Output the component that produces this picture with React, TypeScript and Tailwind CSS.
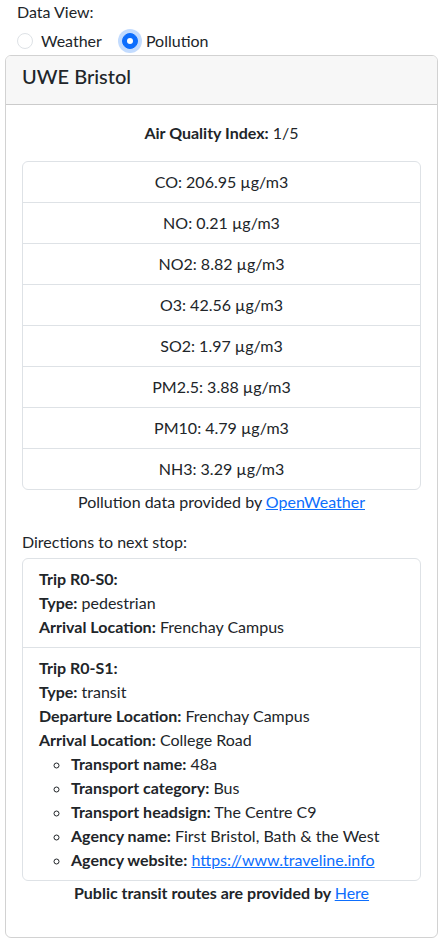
const pollutants = [
  'CO: 206.95 µg/m3',
  'NO: 0.21 µg/m3',
  'NO2: 8.82 µg/m3',
  'O3: 42.56 µg/m3',
  'SO2: 1.97 µg/m3',
  'PM2.5: 3.88 µg/m3',
  'PM10: 4.79 µg/m3',
  'NH3: 3.29 µg/m3',
];

const transitDetails: { label: string; value: string; href?: string }[] = [
  { label: 'Transport name:', value: '48a' },
  { label: 'Transport category:', value: 'Bus' },
  { label: 'Transport headsign:', value: 'The Centre C9' },
  { label: 'Agency name:', value: 'First Bristol, Bath & the West' },
  { label: 'Agency website:', value: 'https://www.traveline.info', href: 'https://www.traveline.info' },
];

function Radio({ checked, label }: { checked: boolean; label: string }) {
  return (
    <label className="flex items-center gap-2">
      <span
        className={
          checked
            ? 'w-4 h-4 rounded-full bg-[#0d6efd] border border-[#0d6efd] flex items-center justify-center shadow-[0_0_0_4px_rgba(13,110,253,0.25)]'
            : 'w-4 h-4 rounded-full bg-white border border-[#dee2e6]'
        }
      >
        {checked && <span className="w-1.5 h-1.5 rounded-full bg-white" />}
      </span>
      <span>{label}</span>
    </label>
  );
}

export default function App() {
  return (
    <div className="bg-white text-[#212529] text-base leading-6 font-['Segoe_UI',Lato,sans-serif] px-[5px] pb-[4px]">
      <div className="pl-3">Data View:</div>
      <div className="flex items-center gap-5 pl-3 h-[31px] pt-[3px]">
        <Radio checked={false} label="Weather" />
        <Radio checked={true} label="Pollution" />
      </div>

      <div className="border border-[rgba(0,0,0,0.175)] rounded-md overflow-hidden">
        <div className="bg-[#f7f7f7] border-b border-[rgba(0,0,0,0.175)] px-4 pt-2 pb-4">
          <h5 className="text-xl leading-6 font-medium">UWE Bristol</h5>
        </div>

        <div className="p-4">
          <p className="text-center mb-4">
            <b className="font-bold">Air Quality Index:</b> 1/5
          </p>
          <ul className="border border-[#dee2e6] rounded-md">
            {pollutants.map((p, i) => (
              <li key={i} className={`text-center px-4 py-2 ${i > 0 ? 'border-t border-[#dee2e6]' : ''}`}>
                {p}
              </li>
            ))}
          </ul>
          <p className="text-center mb-4">
            Pollution data provided by{' '}
            <a href="#" className="text-[#0d6efd] underline">OpenWeather</a>
          </p>

          <p className="mb-1">Directions to next stop:</p>
          <ul className="border border-[#dee2e6] rounded-md">
            <li className="px-4 py-2">
              <div className="font-bold">Trip R0-S0:</div>
              <div><b>Type:</b> pedestrian</div>
              <div><b>Arrival Location:</b> Frenchay Campus</div>
            </li>
            <li className="px-4 py-2 border-t border-[#dee2e6]">
              <div className="font-bold">Trip R0-S1:</div>
              <div><b>Type:</b> transit</div>
              <div><b>Departure Location:</b> Frenchay Campus</div>
              <div><b>Arrival Location:</b> College Road</div>
              <ul className="list-[circle] pl-8">
                {transitDetails.map((d) => (
                  <li key={d.label}>
                    <b>{d.label}</b>{' '}
                    {d.href ? (
                      <a href={d.href} className="text-[#0d6efd] underline">{d.value}</a>
                    ) : (
                      d.value
                    )}
                  </li>
                ))}
              </ul>
            </li>
          </ul>
          <p className="text-center font-bold mb-4">
            Public transit routes are provided by{' '}
            <a href="#" className="text-[#0d6efd] underline font-normal">Here</a>
          </p>
        </div>
      </div>
    </div>
  );
}
